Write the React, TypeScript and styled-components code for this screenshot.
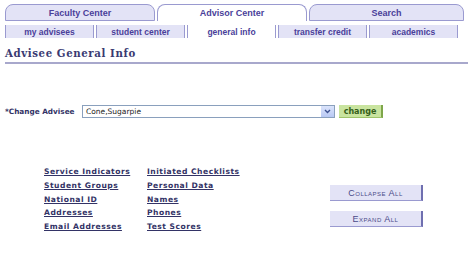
import styled, { createGlobalStyle } from "styled-components";

const GlobalStyle = createGlobalStyle`
  body {
    margin: 0;
    background: #fff;
    font-family: "Liberation Sans", Arial, sans-serif;
  }
`;

const Page = styled.div`
  width: 468px;
  height: 265px;
  overflow: hidden;
`;

const TabRow = styled.div`
  display: flex;
  gap: 2px;
  padding: 4px 0 0 5px;
`;

const Tab = styled.div<{ $active?: boolean; $w: number }>`
  width: ${(p) => p.$w}px;
  height: 17px;
  box-sizing: border-box;
  border: 1px solid #9a9ad0;
  border-bottom: ${(p) => (p.$active ? "none" : "1px solid #9a9ad0")};
  border-radius: 8px 8px 0 0;
  background: ${(p) => (p.$active ? "#fff" : "#e3e3f6")};
  color: #4a3f9a;
  font-size: 9px;
  font-weight: bold;
  display: flex;
  align-items: center;
  justify-content: center;
`;

const SubRow = styled.div`
  display: flex;
  gap: 2px;
  padding: 4px 0 0 5px;
`;

const SubTab = styled.div<{ $active?: boolean }>`
  width: 89px;
  height: 13px;
  box-sizing: border-box;
  border-left: 1px solid #9a9ad0;
  border-right: 1px solid #9a9ad0;
  background: ${(p) => (p.$active ? "#fff" : "#e3e3f6")};
  color: #4a3f9a;
  font-size: 8.5px;
  font-weight: bold;
  display: flex;
  align-items: center;
  justify-content: center;
`;

const Title = styled.h1`
  margin: 9px 0 0 5px;
  font-family: "DejaVu Serif", "Liberation Serif", serif;
  font-size: 10.2px;
  font-weight: bold;
  letter-spacing: 0.6px;
  color: #3a3a72;
`;

const Rule = styled.div`
  margin: 3px 0 0 5px;
  height: 2px;
  background: #a8a8cc;
`;

const AdviseeRow = styled.div`
  display: flex;
  align-items: center;
  margin: 41px 0 0 5px;
`;

const Label = styled.span`
  width: 77px;
  font-family: "DejaVu Sans", Verdana, sans-serif;
  font-size: 7.3px;
  font-weight: bold;
  color: #333366;
`;

const Select = styled.div`
  width: 253px;
  height: 13px;
  box-sizing: border-box;
  border: 1px solid #8aa0bd;
  display: flex;
  align-items: center;
  justify-content: space-between;
  font-family: "DejaVu Sans", Verdana, sans-serif;
  font-size: 7.5px;
  color: #222;
  padding-left: 3px;
`;

const Arrow = styled.div`
  width: 13px;
  height: 11px;
  background: linear-gradient(#dbe4fb, #b8c8f4);
  display: flex;
  align-items: center;
  justify-content: center;
`;

const ChangeButton = styled.div`
  margin-left: 4px;
  width: 44px;
  height: 13px;
  box-sizing: border-box;
  background: #c9e49f;
  border-right: 2px solid #7ea64a;
  border-bottom: 1px solid #9ec46a;
  color: #35601a;
  font-family: "DejaVu Sans", Verdana, sans-serif;
  font-size: 8px;
  font-weight: bold;
  display: flex;
  align-items: center;
  justify-content: center;
`;

const Bottom = styled.div`
  display: flex;
  margin-top: 48px;
`;

const LinkGrid = styled.div`
  display: grid;
  grid-template-columns: 103px 120px;
  grid-auto-rows: 13.75px;
  padding-left: 44px;
`;

const Link = styled.a`
  font-family: "DejaVu Sans", Verdana, sans-serif;
  font-size: 7.6px;
  font-weight: bold;
  letter-spacing: 0.5px;
  line-height: 11px;
  color: #333366;
  text-decoration: underline;
  cursor: pointer;
`;

const ButtonCol = styled.div`
  display: flex;
  flex-direction: column;
  gap: 10px;
  margin: 19px 0 0 63px;
`;

const ActionButton = styled.div`
  width: 93px;
  height: 16px;
  box-sizing: border-box;
  background: #e3e3f6;
  border-right: 2px solid #6f6fb0;
  border-bottom: 1px solid #9a9ad0;
  color: #4a4a88;
  font-size: 9px;
  font-variant: small-caps;
  letter-spacing: 0.5px;
  display: flex;
  align-items: center;
  justify-content: center;
`;

const tabs = [
  { label: "Faculty Center", w: 150 },
  { label: "Advisor Center", w: 150, active: true },
  { label: "Search", w: 155 },
];

const subs = ["my advisees", "student center", "general info", "transfer credit", "academics"];

const links = [
  "Service Indicators",
  "Initiated Checklists",
  "Student Groups",
  "Personal Data",
  "National ID",
  "Names",
  "Addresses",
  "Phones",
  "Email Addresses",
  "Test Scores",
];

export default function App() {
  return (
    <Page>
      <GlobalStyle />
      <TabRow>
        {tabs.map((t) => (
          <Tab key={t.label} $w={t.w} $active={t.active}>
            {t.label}
          </Tab>
        ))}
      </TabRow>
      <SubRow>
        {subs.map((s) => (
          <SubTab key={s} $active={s === "general info"}>
            {s}
          </SubTab>
        ))}
      </SubRow>
      <Title>Advisee General Info</Title>
      <Rule />
      <AdviseeRow>
        <Label>*Change Advisee</Label>
        <Select>
          Cone,Sugarpie
          <Arrow>
            <svg width="7" height="5" viewBox="0 0 7 5">
              <path d="M1 1 L3.5 3.5 L6 1" stroke="#3b4f8f" strokeWidth="1.4" fill="none" />
            </svg>
          </Arrow>
        </Select>
        <ChangeButton>change</ChangeButton>
      </AdviseeRow>
      <Bottom>
        <LinkGrid>
          {links.map((l) => (
            <Link key={l}>{l}</Link>
          ))}
        </LinkGrid>
        <ButtonCol>
          <ActionButton>Collapse All</ActionButton>
          <ActionButton>Expand All</ActionButton>
        </ButtonCol>
      </Bottom>
    </Page>
  );
}
